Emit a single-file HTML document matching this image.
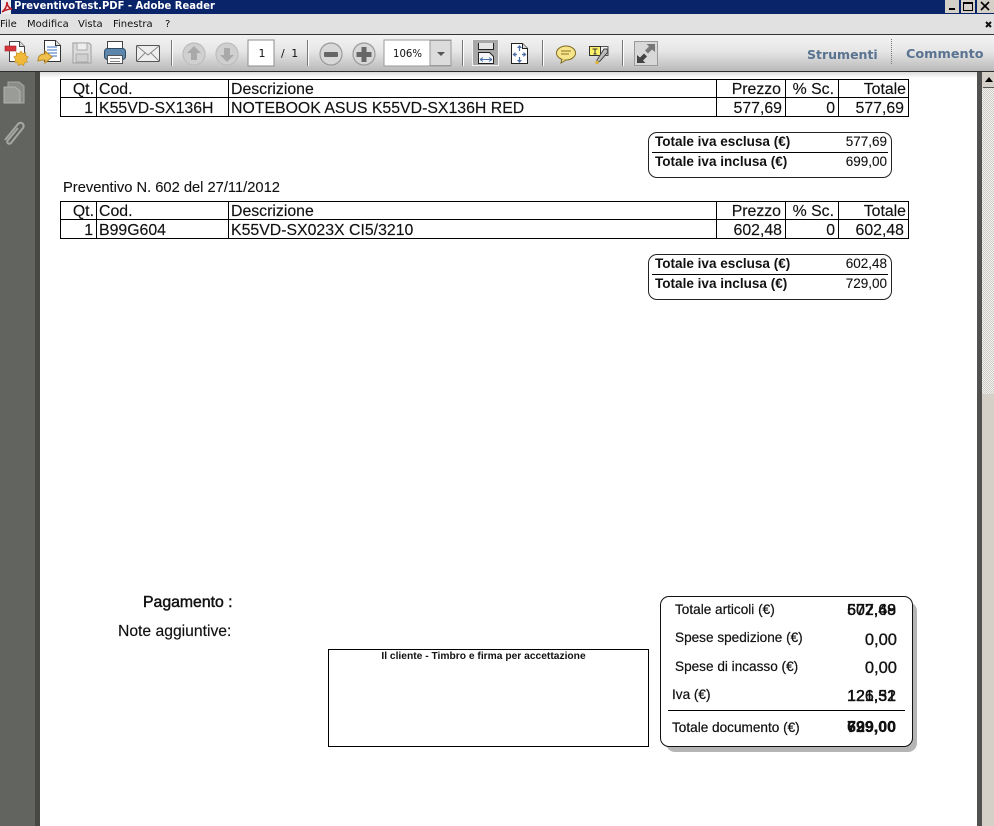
<!DOCTYPE html>
<html>
<head>
<meta charset="utf-8">
<style>
html,body{margin:0;padding:0;background:#fff}
body{width:994px;height:826px;position:relative;overflow:hidden;font-family:"Liberation Sans",sans-serif;color:#111}
div{position:absolute;box-sizing:border-box}
.t{white-space:nowrap;line-height:18px;height:18px}
.r{text-align:right}
.f16{font-size:15.85px;-webkit-text-stroke:.15px #111}
.f13b{font-size:13.55px;font-weight:bold}
.f14{font-size:13.5px;-webkit-text-stroke:.1px #111}
.l{font-size:13.6px;-webkit-text-stroke:.2px #111}
.v{font-size:16px;-webkit-text-stroke:.35px #111}
.m{font-family:"DejaVu Sans",sans-serif;font-size:10px;top:18px;line-height:14px;color:#111}
.b{background:#000}
.dj{font-family:"DejaVu Sans",sans-serif;font-size:11px;top:45px}
.hd{font-family:"DejaVu Sans",sans-serif;font-weight:bold;font-size:12.8px;color:#5a7390;top:45px}
</style>
</head>
<body>
<!-- title bar -->
<div style="left:0;top:0;width:994px;height:14px;background:#0a246a"></div>
<div class="t" style="left:14px;top:-2px;color:#fff;font-family:'DejaVu Sans',sans-serif;font-weight:bold;font-size:11px;line-height:16px;height:16px;transform:scaleX(.91);transform-origin:0 0">PreventivoTest.PDF - Adobe Reader</div>
<svg style="position:absolute;left:0;top:0" width="14" height="14"><path d="M1 0h10v14H1z" fill="#eee"/><path d="M2 12c3-2 5-6 5-10 0 4 2 6 5 7-4 0-7 1-10 3z" fill="none" stroke="#c0202a" stroke-width="1.6"/></svg>
<svg style="position:absolute;left:945px;top:0" width="49" height="14">
<rect x="0" y="0" width="14" height="13" fill="#d4d0c8"/><rect x="4" y="8" width="6" height="2" fill="#000"/>
<rect x="16" y="0" width="14" height="13" fill="#d4d0c8"/><rect x="18.500" y="2.500" width="9" height="8" fill="none" stroke="#000"/><rect x="18" y="2" width="10" height="2" fill="#000"/>
<rect x="32" y="0" width="17" height="13" fill="#d4d0c8"/><path d="M36 2l8 8M44 2l-8 8" stroke="#000" stroke-width="1.6"/>
</svg>
<!-- menu -->
<div style="left:0;top:14px;width:994px;height:20px;background:#e1e1e1"></div>
<div class="m" style="left:0">File</div>
<div class="m" style="left:27px">Modifica</div>
<div class="m" style="left:78px">Vista</div>
<div class="m" style="left:113px">Finestra</div>
<div class="m" style="left:165px">?</div>
<svg style="position:absolute;left:984px;top:20px" width="10" height="10"><path d="M2 2l5 5M7 2l-5 5" stroke="#111" stroke-width="2"/></svg>
<div style="left:0;top:34px;width:994px;height:1px;background:#333"></div>
<!-- toolbar -->
<div style="left:0;top:35px;width:994px;height:36px;background:linear-gradient(#f3f3f3,#e6e6e6 45%,#b9b9b9)"></div>
<div style="left:0;top:71px;width:994px;height:1px;background:#2c2c2c"></div>

<svg style="position:absolute;left:0;top:35px" width="994" height="36">
<!-- doc settings -->
<path d="M9.500 6.500h10l5 5v15h-15z" fill="#fff" stroke="#444"/><path d="M19.500 6.500v5h5" fill="#ddd" stroke="#444"/>
<rect x="5" y="11" width="11" height="5" fill="#d8343c" stroke="#9a2028" stroke-width=".6"/>
<path d="M21 16l1.800 2.500 3-.8-.3 3 2.800 1.300-2 2.300 1.200 2.800-3 .4-.8 3-2.700-1.500-2.700 1.500-.8-3-3-.4 1.200-2.800-2-2.300 2.800-1.300-.3-3 3 .8z" fill="#f0b93a" stroke="#c08a1e" stroke-width=".6"/>
<!-- doc arrow -->
<path d="M44.500 5.500h11l5 5v16h-16z" fill="#fff" stroke="#333"/><path d="M55.500 5.500v5h5" fill="#ddd" stroke="#333"/>
<path d="M47 12h10M47 15h10M47 18h10M50 21h7" stroke="#3a70c0"/>
<path d="M38 26c0-5 3-7 7-7v-3l7 6-7 6v-3c-3 0-5 0-7 1z" fill="#f0c050" stroke="#b88a20"/>
<!-- save disabled -->
<path d="M73 8h16l2 2v18H73z" fill="#dcdcdc" stroke="#a8a8a8" stroke-width="1.2"/>
<rect x="77" y="8" width="10" height="7" fill="#eee" stroke="#aaa"/>
<rect x="76" y="19" width="12" height="8" fill="#cfcfcf" stroke="#aaa"/>
<!-- print -->
<rect x="107.500" y="6.500" width="15" height="8" fill="#fff" stroke="#444"/>
<rect x="104.500" y="13.500" width="21" height="11" rx="3" fill="#5d86ad" stroke="#2e4b66"/>
<rect x="107.500" y="20.500" width="15" height="8" fill="#fff" stroke="#555"/>
<path d="M110 23.500h10M110 26.500h10" stroke="#888"/>
<!-- mail -->
<rect x="136.500" y="10.500" width="23" height="16" rx="1" fill="#eee" stroke="#555"/>
<path d="M137 11l11 9 11-9M137 26l8-8M159 26l-8-8" fill="none" stroke="#888"/>
<!-- sep -->
<rect x="171" y="5" width="1" height="26" fill="#777"/><rect x="172" y="5" width="1" height="26" fill="#fff"/>
<!-- up/down -->
<circle cx="194" cy="19" r="11" fill="#d0d0d0" stroke="#bdbdbd" stroke-width="1.2"/>
<path d="M194 11l7 7h-4v7h-6v-7h-4z" fill="#a9a9a9"/>
<circle cx="227" cy="19" r="11" fill="#d0d0d0" stroke="#bdbdbd" stroke-width="1.2"/>
<path d="M227 27l7-7h-4v-7h-6v7h-4z" fill="#a9a9a9"/>
<!-- page box -->
<rect x="248" y="5" width="26" height="26" fill="#fff" stroke="#8e8e8e" stroke-width="1"/>
<rect x="307" y="5" width="1" height="26" fill="#777"/><rect x="308" y="5" width="1" height="26" fill="#fff"/>
<!-- minus/plus -->
<circle cx="331" cy="19" r="11" fill="#d8d8d8" stroke="#9a9a9a" stroke-width="1.2"/>
<rect x="324" y="17" width="14" height="5" rx="1" fill="#666"/>
<circle cx="364" cy="19" r="11" fill="#d8d8d8" stroke="#9a9a9a" stroke-width="1.2"/>
<path d="M361.500 12h5v5h5v5h-5v5h-5v-5h-5v-5h5z" fill="#666"/>
<!-- zoom box -->
<rect x="384" y="5" width="67" height="26" fill="#fff" stroke="#9a9a9a"/>
<rect x="430" y="5.500" width="21" height="25" fill="#dcdcdc" stroke="#9a9a9a"/>
<path d="M437 17h8l-4 4z" fill="#555"/>
<rect x="462" y="5" width="1" height="26" fill="#777"/><rect x="463" y="5" width="1" height="26" fill="#fff"/>
<!-- fit width active -->
<rect x="472.500" y="4.500" width="26" height="26" fill="#a8a8a8" stroke="#f2f2f2"/>
<path d="M478 8h16v6h-16z" fill="#e6e6e6"/><path d="M478.500 8v6.500h15V8" fill="none" stroke="#222"/>
<path d="M478.500 17.500h11l4 4v7h-15z" fill="#f4f6fa" stroke="#222"/>
<path d="M480 24.500h12M480 24.500l3-2M480 24.500l3 2M492 24.500l-3-2M492 24.500l-3 2" stroke="#4a6fa5" fill="none"/>
<!-- fit page -->
<path d="M511.500 8.500h11l5 5v15h-16z" fill="#fff" stroke="#222"/><path d="M522.500 8.500v5h5" fill="#ddd" stroke="#222"/>
<path d="M519.500 11v5M519.500 22v5M513 19.500h4M522 19.500h4" stroke="#4a6fa5" fill="none" stroke-width="1.200"/>
<path d="M519.500 10l-2.500 3h5zM519.500 28l-2.500-3h5zM512.500 19.500l3-2.500v5zM526.500 19.500l-3-2.500v5z" fill="#4a6fa5"/>
<rect x="542" y="5" width="1" height="26" fill="#777"/><rect x="543" y="5" width="1" height="26" fill="#fff"/>
<!-- comment -->
<ellipse cx="566" cy="18" rx="9.500" ry="7" fill="#f6e58a" stroke="#7d6a20"/>
<path d="M562 24l-1 4 5-3" fill="#f6e58a" stroke="#7d6a20"/>
<path d="M561 16h10M561 19h8" stroke="#8a7520"/>
<!-- text tool -->
<rect x="598" y="11.500" width="10" height="9" fill="#f0f0f0" stroke="#555"/>
<rect x="589.500" y="11.500" width="11" height="9" fill="#fdf36a" stroke="#333"/>
<path d="M592.500 14h5M595 14v5M593.500 19h3" stroke="#333" fill="none"/>
<path d="M604 14h3l1 3-8 9-3 2 0-3z" fill="#bcbcbc" stroke="#444"/>
<circle cx="597" cy="27.500" r="1.600" fill="#e0b030"/>
<rect x="622" y="5" width="1" height="26" fill="#777"/><rect x="623" y="5" width="1" height="26" fill="#fff"/>
<!-- fullscreen -->
<rect x="634.500" y="6.500" width="23" height="24" fill="#d8d8d8" stroke="#9a9a9a"/>
<path d="M655 9v8l-3-2.500-4 4-3-3 4-4-2.500-2.500z" fill="#777"/>
<path d="M637 28v-8l3 2.500 4-4 3 3-4 4 2.500 2.500z" fill="#444"/>
<!-- dotted sep -->
<path d="M891.500 4v26" stroke="#777" stroke-dasharray="1 1"/>
</svg>
<div class="t dj" style="left:249px;width:26px;text-align:center">1</div>
<div class="t dj" style="left:281px;letter-spacing:1.500px">/ 1</div>
<div class="t dj" style="left:393px;transform:scaleX(.92);transform-origin:0 0">106%</div>
<div class="t hd" style="left:807px;top:46px;font-size:12.500px">Strumenti</div>
<div class="t hd" style="left:906px;top:46px">Commento</div>

<!-- left panel -->
<div style="left:0;top:72px;width:35px;height:754px;background:#62645f"></div>
<div style="left:35px;top:72px;width:5px;height:754px;background:#474846"></div>
<svg style="position:absolute;left:0;top:72px" width="35" height="80">
<path d="M8 10h11l5 4v17H8z" fill="#8a8c88" stroke="#a9aaa7"/>
<path d="M4 15h11l5 4v12H4z" fill="#9a9c98" stroke="#b2b3b0"/>
<path d="M5 68l13-16c3-3 7 0 5 4l-12 15c-2 2-5 0-3-3l10-12" fill="none" stroke="#a6a7a4" stroke-width="2"/>
</svg>
<!-- right strip/scrollbar -->
<div style="left:977px;top:72px;width:5px;height:754px;background:#515250"></div>
<div style="left:982px;top:72px;width:12px;height:754px;background:#d4d0c8"></div>
<div style="left:982px;top:88px;width:12px;height:306px;background:repeating-conic-gradient(#f2f0ec 0 25%,#cfcdc8 0 50%) 0 0/2px 2px"></div>
<div style="left:983px;top:73px;width:11px;height:15px;background:#d4d0c8;border-bottom:1px solid #555"></div>
<svg style="position:absolute;left:984px;top:76px" width="10" height="8"><path d="M1 6h8L5 1z" fill="#000"/></svg>
<div style="left:40px;top:72px;width:937px;height:6px;background:linear-gradient(#dcdcdc,#fff)"></div>

<!-- table 1 -->
<div style="left:60px;top:79px;width:849px;height:38px;border:1px solid #000"></div>
<div class="b" style="left:60px;top:97px;width:849px;height:1px"></div>
<div class="b" style="left:96px;top:79px;width:1px;height:38px"></div>
<div class="b" style="left:228px;top:79px;width:1px;height:38px"></div>
<div class="b" style="left:716px;top:79px;width:1px;height:38px"></div>
<div class="b" style="left:785px;top:79px;width:1px;height:38px"></div>
<div class="b" style="left:838px;top:79px;width:1px;height:38px"></div>
<div class="t f16 r" style="left:60px;top:81px;width:34px">Qt.</div>
<div class="t f16" style="left:99px;top:81px">Cod.</div>
<div class="t f16" style="left:231px;top:81px">Descrizione</div>
<div class="t f16 r" style="left:716px;top:81px;width:65px">Prezzo</div>
<div class="t f16 r" style="left:785px;top:81px;width:49px">% Sc.</div>
<div class="t f16 r" style="left:838px;top:81px;width:68px">Totale</div>
<div class="t f16 r" style="left:60px;top:100px;width:33px">1</div>
<div class="t f16" style="left:99px;top:100px">K55VD-SX136H</div>
<div class="t f16" style="left:231px;top:100px">NOTEBOOK ASUS K55VD-SX136H RED</div>
<div class="t f16 r" style="left:716px;top:100px;width:66px">577,69</div>
<div class="t f16 r" style="left:785px;top:100px;width:50px">0</div>
<div class="t f16 r" style="left:838px;top:100px;width:66px">577,69</div>

<!-- totals 1 -->
<div style="left:648px;top:132px;width:244px;height:46px;border:1px solid #222;border-radius:9px"></div>
<div class="b" style="left:652px;top:152px;width:236px;height:1px"></div>
<div class="t f13b" style="left:655px;top:133px">Totale iva esclusa (€)</div>
<div class="t f14 r" style="left:800px;top:133px;width:87px">577,69</div>
<div class="t f13b" style="left:655px;top:153px">Totale iva inclusa (€)</div>
<div class="t f14 r" style="left:800px;top:153px;width:87px">699,00</div>

<div class="t" style="left:63px;top:179px;font-size:14.700px;-webkit-text-stroke:.1px #111">Preventivo N. 602 del 27/11/2012</div>

<!-- table 2 -->
<div style="left:60px;top:201px;width:849px;height:38px;border:1px solid #000"></div>
<div class="b" style="left:60px;top:219px;width:849px;height:1px"></div>
<div class="b" style="left:96px;top:201px;width:1px;height:38px"></div>
<div class="b" style="left:228px;top:201px;width:1px;height:38px"></div>
<div class="b" style="left:716px;top:201px;width:1px;height:38px"></div>
<div class="b" style="left:785px;top:201px;width:1px;height:38px"></div>
<div class="b" style="left:838px;top:201px;width:1px;height:38px"></div>
<div class="t f16 r" style="left:60px;top:203px;width:34px">Qt.</div>
<div class="t f16" style="left:99px;top:203px">Cod.</div>
<div class="t f16" style="left:231px;top:203px">Descrizione</div>
<div class="t f16 r" style="left:716px;top:203px;width:65px">Prezzo</div>
<div class="t f16 r" style="left:785px;top:203px;width:49px">% Sc.</div>
<div class="t f16 r" style="left:838px;top:203px;width:68px">Totale</div>
<div class="t f16 r" style="left:60px;top:222px;width:33px">1</div>
<div class="t f16" style="left:99px;top:222px">B99G604</div>
<div class="t f16" style="left:231px;top:222px">K55VD-SX023X CI5/3210</div>
<div class="t f16 r" style="left:716px;top:222px;width:66px">602,48</div>
<div class="t f16 r" style="left:785px;top:222px;width:50px">0</div>
<div class="t f16 r" style="left:838px;top:222px;width:66px">602,48</div>

<!-- totals 2 -->
<div style="left:648px;top:254px;width:244px;height:46px;border:1px solid #222;border-radius:9px"></div>
<div class="b" style="left:652px;top:274px;width:236px;height:1px"></div>
<div class="t f13b" style="left:655px;top:255px">Totale iva esclusa (€)</div>
<div class="t f14 r" style="left:800px;top:255px;width:87px">602,48</div>
<div class="t f13b" style="left:655px;top:275px">Totale iva inclusa (€)</div>
<div class="t f14 r" style="left:800px;top:275px;width:87px">729,00</div>

<!-- payment -->
<div class="t" style="left:143px;top:594px;font-size:15.800px;-webkit-text-stroke:.45px #111">Pagamento :</div>
<div class="t" style="left:118px;top:623px;font-size:15.700px;-webkit-text-stroke:.15px #111">Note aggiuntive:</div>

<!-- signature -->
<div style="left:328px;top:649px;width:321px;height:98px;border:1px solid #000"></div>
<div class="t" style="left:323px;top:648px;width:321px;text-align:center;font-size:10.250px;font-weight:bold">Il cliente - Timbro e firma per accettazione</div>

<!-- summary -->
<div style="left:666px;top:602px;width:251px;height:150px;background:#b5b5b5;border-radius:9px"></div>
<div style="left:660px;top:596px;width:253px;height:151px;background:#fff;border:1px solid #111;border-radius:9px"></div>
<div class="b" style="left:668px;top:710px;width:237px;height:1px"></div>
<div class="t l" style="left:675px;top:601px">Totale articoli (€)</div>
<div class="t r v" style="left:800px;top:602px;width:96px">577,69</div>
<div class="t r v" style="left:800px;top:602px;width:96px">602,48</div>
<div class="t l" style="left:675px;top:629px">Spese spedizione (€)</div>
<div class="t r v" style="left:800px;top:631px;width:97px;font-size:16.500px">0,00</div>
<div class="t l" style="left:675px;top:658px">Spese di incasso (€)</div>
<div class="t r v" style="left:800px;top:659px;width:97px;font-size:16.500px">0,00</div>
<div class="t l" style="left:672px;top:686px">Iva (€)</div>
<div class="t r v" style="left:800px;top:688px;width:96px">121,31</div>
<div class="t r v" style="left:800px;top:688px;width:96px">126,52</div>
<div class="t l" style="left:672px;top:719px">Totale documento (€)</div>
<div class="t r" style="left:800px;top:719px;width:96px;font-size:16px;font-weight:bold;-webkit-text-stroke:.2px #111">699,00</div>
<div class="t r" style="left:800px;top:719px;width:96px;font-size:16px;font-weight:bold;-webkit-text-stroke:.2px #111">729,00</div>
</body>
</html>
